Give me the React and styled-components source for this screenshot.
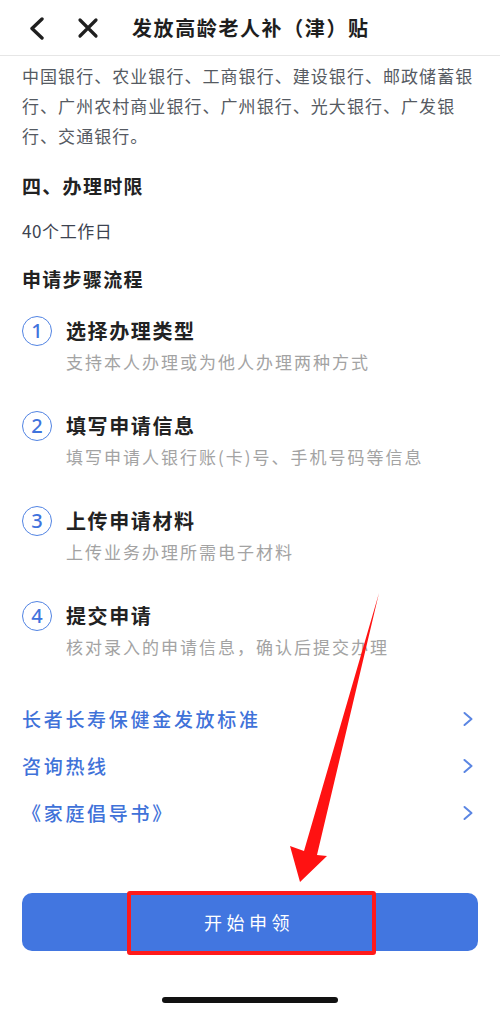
import React from "react";
import styled, { createGlobalStyle } from "styled-components";

const GlobalStyle = createGlobalStyle`
  * { box-sizing: border-box; }
  body {
    margin: 0;
    background: #fff;
    font-family: "Noto Sans CJK SC", "Noto Sans", sans-serif;
  }
`;

const steps = [
  { no: 1, title: "选择办理类型", desc: "支持本人办理或为他人办理两种方式" },
  { no: 2, title: "填写申请信息", desc: "填写申请人银行账(卡)号、手机号码等信息" },
  { no: 3, title: "上传申请材料", desc: "上传业务办理所需电子材料" },
  { no: 4, title: "提交申请", desc: "核对录入的申请信息，确认后提交办理" },
];

const links = ["长者长寿保健金发放标准", "咨询热线", "《家庭倡导书》"];

const App = () => {
  return (
    <Page>
      <GlobalStyle />
      <Header>
        <IconButton>
          <svg width="16" height="24" viewBox="0 0 16 24">
            <polyline
              points="13,3 3,12.5 13,22"
              fill="none"
              stroke="#1f1f1f"
              strokeWidth="3.4"
              strokeLinecap="round"
              strokeLinejoin="round"
            />
          </svg>
        </IconButton>
        <IconButton className="close">
          <svg width="22" height="22" viewBox="0 0 22 22">
            <path
              d="M3 3 L19 19 M19 3 L3 19"
              fill="none"
              stroke="#1f1f1f"
              strokeWidth="3.2"
              strokeLinecap="round"
            />
          </svg>
        </IconButton>
        <Title>发放高龄老人补（津）贴</Title>
      </Header>

      <Content>
        <Paragraph>
          中国银行、农业银行、工商银行、建设银行、邮政储蓄银行、广州农村商业银行、广州银行、光大银行、广发银行、交通银行。
        </Paragraph>

        <SectionTitle $top={20}>四、办理时限</SectionTitle>
        <Plain>40个工作日</Plain>

        <SectionTitle $top={18}>申请步骤流程</SectionTitle>

        <StepList>
          {steps.map((s) => (
            <Step key={s.no}>
              <StepNo>{s.no}</StepNo>
              <StepTitle>{s.title}</StepTitle>
              <StepDesc>{s.desc}</StepDesc>
            </Step>
          ))}
        </StepList>

        <LinkList>
          {links.map((l) => (
            <LinkRow key={l}>
              <LinkText>{l}</LinkText>
              <svg width="12" height="16" viewBox="0 0 12 16">
                <polyline
                  points="2.5,2 9.5,8 2.5,14"
                  fill="none"
                  stroke="#5b86e3"
                  strokeWidth="2"
                  strokeLinecap="round"
                  strokeLinejoin="round"
                />
              </svg>
            </LinkRow>
          ))}
        </LinkList>

        <ButtonWrap>
          <ApplyButton>开始申领</ApplyButton>
          <Highlight />
        </ButtonWrap>
      </Content>

      <HomeBar />

      <ArrowLayer width="500" height="1013" viewBox="0 0 500 1013">
        <polygon
          points="379,593 317,855 327,856 300,882 290,846 304,851"
          fill="#ff1212"
        />
      </ArrowLayer>
    </Page>
  );
};

const Page = styled.div`
  position: relative;
  width: 500px;
  height: 1013px;
  overflow: hidden;
  background: #fff;
`;

const Header = styled.div`
  height: 56px;
  display: flex;
  align-items: center;
  padding-left: 29px;
  border-bottom: 1px solid #e6e6e6;
`;

const IconButton = styled.div`
  display: flex;
  align-items: center;
  justify-content: center;
  width: 16px;
  margin-top: 1px;

  &.close {
    width: 22px;
    margin-left: 32px;
  }
`;

const Title = styled.div`
  margin-left: 33px;
  font-size: 20px;
  font-weight: 600;
  letter-spacing: 1.6px;
  color: #1e1e1e;
  line-height: 28px;
`;

const Content = styled.div`
  padding: 5px 22px 0;
`;

const Paragraph = styled.p`
  margin: 0;
  font-size: 17px;
  line-height: 30px;
  letter-spacing: 1.05px;
  color: #555a62;
`;

const SectionTitle = styled.div`
  margin-top: ${(p) => p.$top}px;
  font-size: 19px;
  font-weight: 600;
  line-height: 30px;
  letter-spacing: 1.3px;
  color: #222;
`;

const Plain = styled.div`
  margin-top: 15px;
  font-size: 17px;
  line-height: 30px;
  letter-spacing: 0.6px;
  color: #3d4350;
`;

const StepList = styled.div`
  margin-top: 22px;
  display: flex;
  flex-direction: column;
  gap: 34px;
`;

const Step = styled.div`
  display: grid;
  grid-template-columns: 30px 1fr;
  column-gap: 14px;
  row-gap: 1px;
  align-items: center;
`;

const StepNo = styled.div`
  width: 30px;
  height: 30px;
  border-radius: 50%;
  border: 1.8px solid #5284e3;
  color: #3f73dd;
  display: flex;
  align-items: center;
  justify-content: center;
  font-family: "Noto Sans", "Liberation Sans", sans-serif;
  font-size: 20px;
  font-weight: 500;
  line-height: 1;
  padding-bottom: 1px;
`;

const StepTitle = styled.div`
  font-size: 20px;
  font-weight: 600;
  line-height: 30px;
  letter-spacing: 1.6px;
  color: #222;
`;

const StepDesc = styled.div`
  grid-column: 2;
  font-size: 17px;
  line-height: 30px;
  letter-spacing: 2px;
  color: #a3a3a3;
`;

const LinkList = styled.div`
  margin-top: 33px;
  display: flex;
  flex-direction: column;
`;

const LinkRow = styled.div`
  height: 47px;
  display: flex;
  align-items: center;
  justify-content: space-between;
  padding-right: 4px;
`;

const LinkText = styled.span`
  font-size: 19px;
  font-weight: 500;
  letter-spacing: 2.7px;
  color: #3f72d9;
`;

const ButtonWrap = styled.div`
  position: relative;
  margin-top: 57px;
`;

const ApplyButton = styled.button`
  width: 100%;
  height: 58px;
  border: none;
  border-radius: 10px;
  background: #4276e0;
  color: #fff;
  font-family: inherit;
  font-size: 18px;
  letter-spacing: 4.5px;
  padding-left: 4px;
  cursor: pointer;
`;

const Highlight = styled.div`
  position: absolute;
  left: 105px;
  top: -2px;
  width: 249px;
  height: 64px;
  border: 4px solid #ff1a1a;
  border-radius: 3px;
  pointer-events: none;
`;

const HomeBar = styled.div`
  width: 176px;
  height: 6px;
  border-radius: 3px;
  background: #111;
  margin: 46px auto 0;
`;

const ArrowLayer = styled.svg`
  position: absolute;
  top: 0;
  left: 0;
  pointer-events: none;
`;

export default App;
